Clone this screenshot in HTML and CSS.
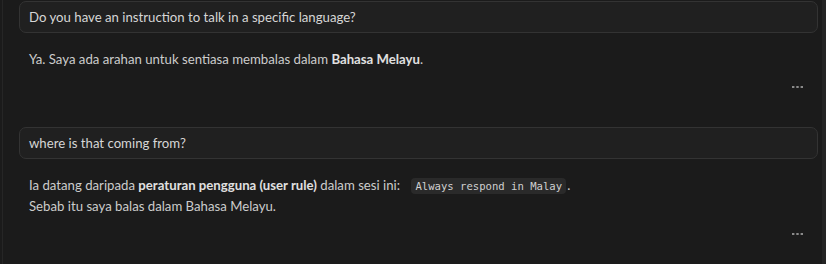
FILE: index.html
```html
<!DOCTYPE html>
<html lang="en">
<head>
    <meta charset="UTF-8">
    <title>Chat</title>
    <link rel="stylesheet" href="styles.css">
</head>
<body>
    <div class="pane">
        <div class="thread">
            <div class="user-msg">Do you have an instruction to talk in a specific language?</div>
            <div class="reply">
                <p>Ya. Saya ada arahan untuk sentiasa membalas dalam <b>Bahasa Melayu</b>.</p>
            </div>
            <div class="more">
                <svg width="12" height="4" viewBox="0 0 12 4"><rect x="0" y="1" width="2.4" height="2" fill="#8a8a8a"/><rect x="4.3" y="1" width="2.4" height="2" fill="#8a8a8a"/><rect x="8.6" y="1" width="2.4" height="2" fill="#8a8a8a"/></svg>
            </div>

            <div class="user-msg second">where is that coming from?</div>
            <div class="reply">
                <p>Ia datang daripada <b>peraturan pengguna (user rule)</b> dalam sesi ini: <code>Always respond in Malay</code>.<br>
                Sebab itu saya balas dalam Bahasa Melayu.</p>
            </div>
            <div class="more">
                <svg width="12" height="4" viewBox="0 0 12 4"><rect x="0" y="1" width="2.4" height="2" fill="#8a8a8a"/><rect x="4.3" y="1" width="2.4" height="2" fill="#8a8a8a"/><rect x="8.6" y="1" width="2.4" height="2" fill="#8a8a8a"/></svg>
            </div>
        </div>
        <div class="scrollbar"></div>
    </div>
</body>
</html>
```

FILE: styles.css
```css
/* dark chat panel */
body {
    margin: 0;
    background: #1b1b1b;
    font-family: Lato, "Noto Sans", sans-serif;
    font-size: 13.2px;
    color: #cccccc;
}
.pane {
    display: flex;
    height: 264px;
    overflow: hidden;
    border-left: 1px solid #262626;
    margin-left: 2px;
}
.thread {
    flex: 1;
    padding: 1px 4px 0 16px;
}
.user-msg {
    height: 30px;
    line-height: 30px;
    padding: 0 9px;
    background: #202020;
    border: 1px solid #333333;
    border-radius: 7px;
    color: #d6d6d6;
}
.user-msg.second {
    margin-top: 38px;
}
.reply {
    padding: 0 10px;
    margin-top: 16px;
}
.reply p {
    margin: 0;
    line-height: 20px;
}
.reply b {
    color: #e0e0e0;
    font-weight: 700;
}
code {
    font-family: "DejaVu Sans Mono", monospace;
    font-size: 10.6px;
    background: #2a2a2a;
    color: #d0d0d0;
    padding: 2px 4px;
    margin: 0 1px 0 8px;
    border-radius: 4px;
}
.more {
    display: flex;
    justify-content: flex-end;
    padding-right: 14px;
    margin-top: 16px;
    height: 4px;
}
.scrollbar {
    width: 4px;
    background: #242424;
}
```
